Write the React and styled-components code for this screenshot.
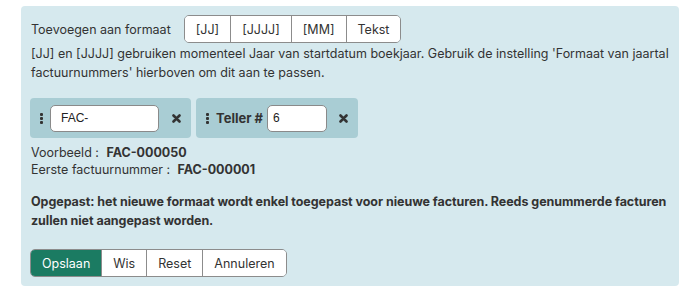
import React from 'react';
import styled, { createGlobalStyle } from 'styled-components';

const GlobalStyle = createGlobalStyle`
  body {
    margin: 0;
    background: #ffffff;
    font-family: Inter, 'Noto Sans', sans-serif;
    color: #333333;
  }
`;

const Panel = styled.div`
  margin: 6px 0 0 21px;
  width: 658px;
  box-sizing: border-box;
  padding: 9px 2px 9px 9px;
  background: #d6e9ee;
  border-radius: 4px;
  font-size: 12.5px;
  line-height: 19px;
`;

const FormatRow = styled.div`
  display: flex;
  align-items: center;
  gap: 13px;
  padding-left: 1px;
`;

const Group = styled.div`
  display: flex;
  height: 28px;
  border: 1px solid #8c8c8c;
  border-radius: 5px;
  overflow: hidden;
  box-sizing: border-box;
`;

const GroupButton = styled.button`
  font-family: Inter, 'Noto Sans', sans-serif;
  font-size: 12.5px;
  color: ${p => (p.$primary ? '#ffffff' : '#333333')};
  background: ${p => (p.$primary ? '#1b7b62' : '#ffffff')};
  border: none;
  border-left: ${p => (p.$first ? 'none' : '1px solid #8c8c8c')};
  padding: 0 ${p => p.$pad || 11}px;
  margin: 0;
  height: 100%;
  cursor: pointer;
`;

const Hint = styled.p`
  margin: 1px 0 0 1px;
`;

const Chips = styled.div`
  display: flex;
  gap: 5px;
  margin-top: 16px;
`;

const Chip = styled.div`
  display: flex;
  align-items: center;
  height: 40px;
  box-sizing: border-box;
  padding: 0 10px;
  background: #a9cdd4;
  border-radius: 4px;
`;

const Handle = styled.span`
  display: flex;
  margin-right: 7px;
`;

const ChipLabel = styled.span`
  font-weight: 700;
  font-size: 13px;
  margin-right: 4px;
`;

const Field = styled.input`
  width: ${p => p.$width}px;
  height: 27px;
  box-sizing: border-box;
  border: 1px solid #8a8a8a;
  border-radius: 5px;
  background: #ffffff;
  padding: 0 0 0 ${p => p.$pad}px;
  font-family: 'Liberation Sans', Arial, sans-serif;
  font-size: 12px;
  color: #222222;
  outline: none;
`;

const Remove = styled.span`
  display: flex;
  margin-left: ${p => p.$gap}px;
`;

const Info = styled.div`
  margin: 6px 0 0 1px;
  line-height: 17px;
`;

const Strong = styled.b`
  font-weight: 700;
  margin-left: 4px;
`;

const Warning = styled.p`
  margin: 14px 0 0 1px;
  font-weight: 700;
  letter-spacing: -0.05px;
`;

const Actions = styled.div`
  margin-top: 19px;
  display: flex;
`;

function DotsIcon() {
  return (
    <svg width="3" height="11" viewBox="0 0 3 11">
      <rect x="0" y="0" width="3" height="3" rx="1" fill="#333" />
      <rect x="0" y="4" width="3" height="3" rx="1" fill="#333" />
      <rect x="0" y="8" width="3" height="3" rx="1" fill="#333" />
    </svg>
  );
}

function TimesIcon() {
  return (
    <svg width="9" height="9" viewBox="0 0 9 9">
      <path d="M1.5 1.5 L7.5 7.5 M7.5 1.5 L1.5 7.5" stroke="#333" strokeWidth="2.6" strokeLinecap="round" />
    </svg>
  );
}

export default function App() {
  return (
    <>
      <GlobalStyle />
      <Panel>
        <FormatRow>
          <span>Toevoegen aan formaat</span>
          <Group>
            <GroupButton $first>[JJ]</GroupButton>
            <GroupButton>[JJJJ]</GroupButton>
            <GroupButton>[MM]</GroupButton>
            <GroupButton>Tekst</GroupButton>
          </Group>
        </FormatRow>
        <Hint>
          [JJ] en [JJJJ] gebruiken momenteel Jaar van startdatum boekjaar. Gebruik de instelling 'Formaat van jaartal
          factuurnummers' hierboven om dit aan te passen.
        </Hint>

        <Chips>
          <Chip>
            <Handle><DotsIcon /></Handle>
            <Field $width={109} $pad={10} defaultValue="FAC-" />
            <Remove $gap={13}><TimesIcon /></Remove>
          </Chip>
          <Chip>
            <Handle><DotsIcon /></Handle>
            <ChipLabel>Teller #</ChipLabel>
            <Field $width={60} $pad={5} defaultValue="6" />
            <Remove $gap={12}><TimesIcon /></Remove>
          </Chip>
        </Chips>

        <Info>
          <div>Voorbeeld : <Strong>FAC-000050</Strong></div>
          <div>Eerste factuurnummer : <Strong>FAC-000001</Strong></div>
        </Info>

        <Warning>
          Opgepast: het nieuwe formaat wordt enkel toegepast voor nieuwe facturen. Reeds genummerde facturen
          zullen niet aangepast worden.
        </Warning>

        <Actions>
          <Group>
            <GroupButton $first $primary>Opslaan</GroupButton>
            <GroupButton>Wis</GroupButton>
            <GroupButton>Reset</GroupButton>
            <GroupButton>Annuleren</GroupButton>
          </Group>
        </Actions>
      </Panel>
    </>
  );
}
